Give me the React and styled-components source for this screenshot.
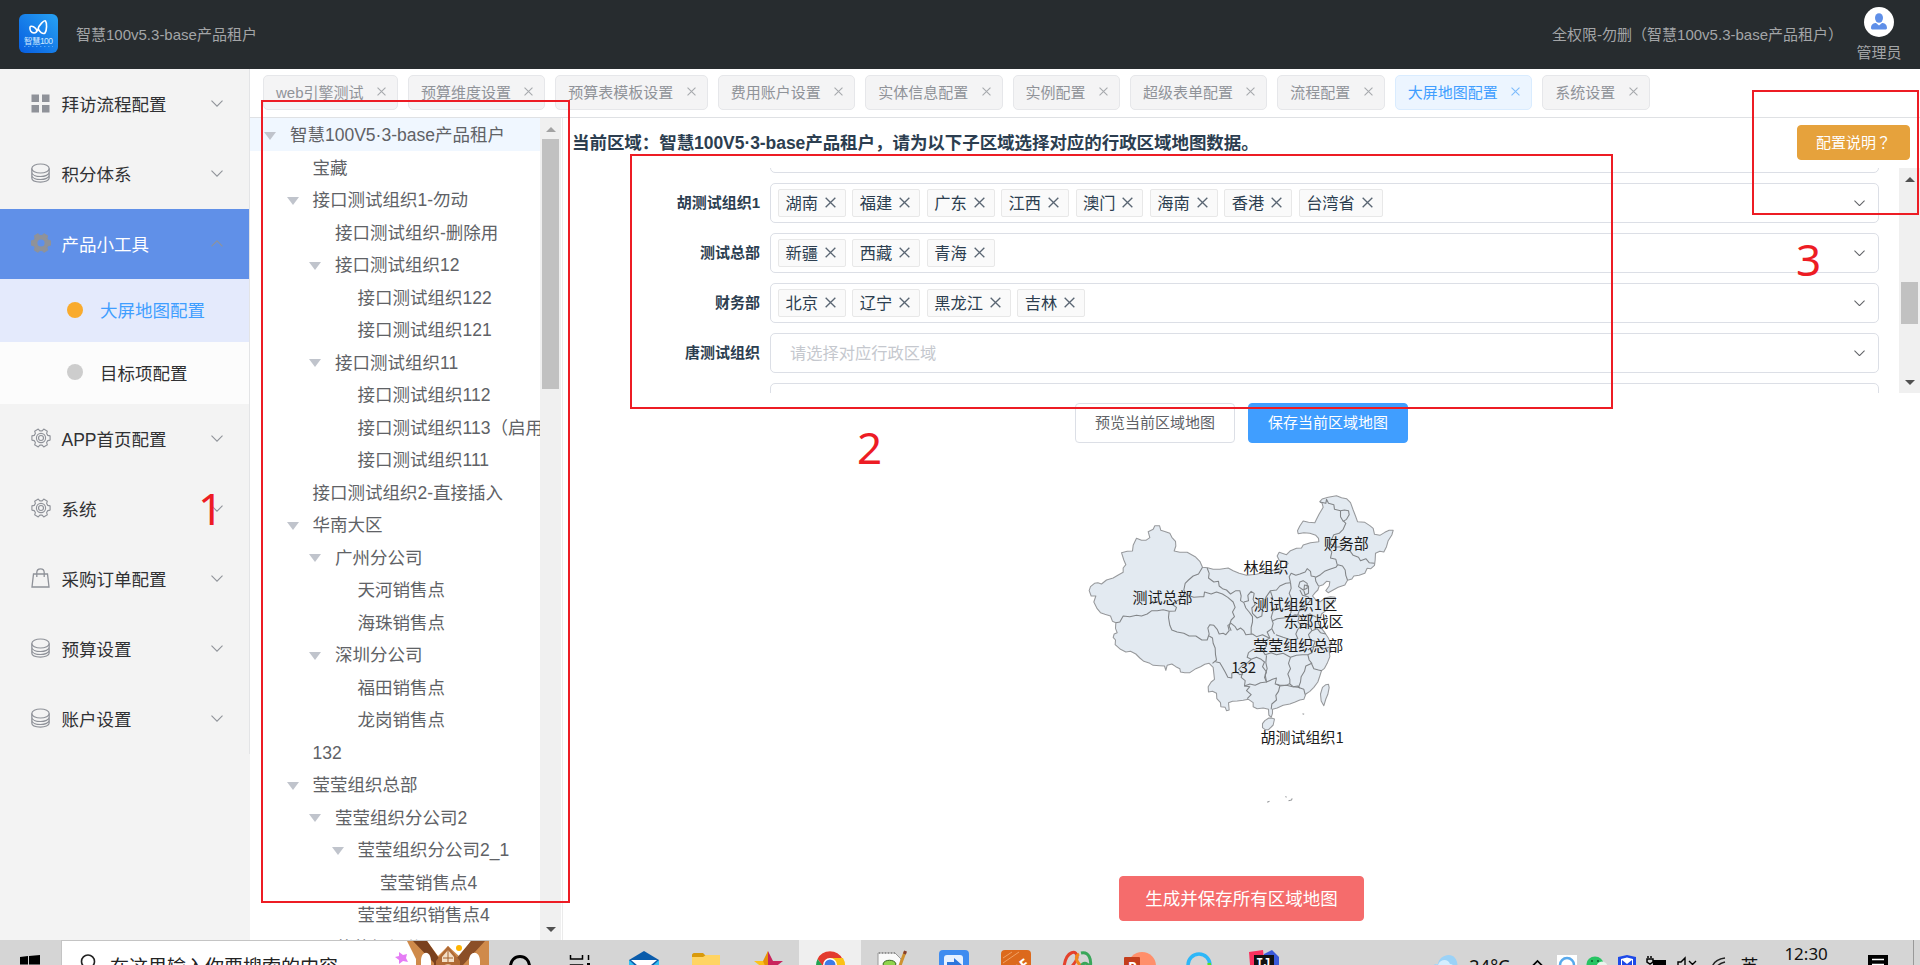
import React from "react";
import styled, { createGlobalStyle } from "styled-components";

const Global = createGlobalStyle`
  * { box-sizing: border-box; }
  html, body { margin: 0; padding: 0; }
  body {
    width: 1920px; height: 965px; overflow: hidden; background: #fff;
    font-family: "Liberation Sans", "Noto Sans CJK SC", sans-serif;
    color: #2c3e50;
  }
`;

const Page = styled.div`
  position: relative; display: flex; flex-direction: column;
  width: 1920px; height: 965px; overflow: hidden;
`;

/* ---------- top bar ---------- */
const Header = styled.header`
  display: flex; align-items: center; height: 69px; flex: none;
  background: #272c2f; color: #a3a5a7; font-size: 15px; padding: 0 18px 0 19px;
`;
const Tenant = styled.span`margin: 0 auto 3px 18px; white-space: nowrap;`;
const Logo = styled.svg`width: 39px; height: 39px; display: block; margin-bottom: 2px;`;
const Role = styled.span`white-space: nowrap; margin: 0 13px 3px 0;`;
const User = styled.div`
  display: flex; flex-direction: column; align-items: center; width: 46px;
  height: 69px; padding-top: 7px; line-height: 20px; gap: 6px;
`;

/* ---------- body ---------- */
const Body = styled.div`display: flex; flex: none; height: 871px;`;

const Sidebar = styled.nav`
  width: 250px; flex: none; background: #f3f3f3; font-size: 17.5px; color: #303133;
`;
const MenuList = styled.div`border-right: 1px solid #e3e4e6;`;
const MenuItem = styled.div`
  display: flex; align-items: center; height: 70px; padding: 0 26px 2px 31px;
  background: ${(p) => (p.$open ? "#6090e8" : "transparent")};
  color: ${(p) => (p.$open ? "#fff" : "#303133")};
`;
const MenuIcon = styled.span`
  display: flex; align-items: center; justify-content: center; width: 19px; height: 20px;
  svg { display: block; flex: none; }
`;
const MenuLabel = styled.span`flex: 1; margin-left: 11.5px; white-space: nowrap;`;
const SubItem = styled.div`
  display: flex; align-items: center; height: 62.5px; padding: 0 0 1px 67px; gap: 17px;
  background: ${(p) => (p.$active ? "#e4eafc" : "#fcfcfc")};
  color: ${(p) => (p.$active ? "#409eff" : "#303133")};
`;
const Dot = styled.i`
  width: 16px; height: 16px; border-radius: 50%; 
  background: ${(p) => (p.$active ? "#f9ab2d" : "#cdcdcd")};
`;

const Content = styled.div`display: flex; flex-direction: column; width: 1670px;`;
const Tabs = styled.div`
  display: flex; gap: 10px; height: 49px; flex: none; padding: 6px 0 0 13px;
  border-bottom: 1px solid #dfe1e4; 
`;
const Tab = styled.div`
  display: flex; align-items: center; height: 35px; flex: none; gap: 13.4px;
  padding: 0 11px 2px 12px; border-radius: 5px; font-size: 15px; white-space: nowrap;
  border: 1px solid ${(p) => (p.$active ? "#d9ecff" : "#e6e7ea")};
  background: ${(p) => (p.$active ? "#ecf5ff" : "#f4f4f5")};
  color: ${(p) => (p.$active ? "#409eff" : "#909399")};
`;
const Columns = styled.div`display: flex; height: 822px;`;

/* ---------- tree ---------- */
const TreePane = styled.div`
  display: flex; width: 313px; flex: none; height: 822px; overflow: hidden;
  border-right: 1px solid #ebebeb;
`;
const TreeRows = styled.div`width: 290px; flex: none; height: 822px; overflow: hidden;`;
const TreeRow = styled.div`
  display: flex; align-items: center; height: 32.5px; font-size: 17.5px; color: #606266;
  white-space: nowrap; overflow: hidden; line-height: 30px;
  padding: 2px 0 0 ${(p) => 14 + p.$level * 22.5}px;
  background: ${(p) => (p.$active ? "#f0f7ff" : "#fff")};
`;
const Caret = styled.span`
  width: 26px; flex: none; height: 8px; margin-top: 1px;
  &::before {
    content: ""; display: ${(p) => (p.$show ? "block" : "none")}; width: 0; height: 0;
    border: 6.5px solid transparent; border-top: 8px solid #c0c4cc; border-bottom: 0;
  }
`;
const Track = styled.div`
  display: flex; flex-direction: column; align-items: center; justify-content: space-between;
  width: 21px; height: ${(p) => p.$h}px; flex: none; background: #f0f0f0; padding: 9px 0 8px;
`;
const Arrow = styled.i`
  width: 0; height: 0; border: 5px solid transparent;
  ${(p) => (p.$up ? "border-top: 0; border-bottom" : "border-bottom: 0; border-top")}: 5px solid ${(p) => p.$c || "#505050"};
`;
const Thumb = styled.i`
  width: 17px; height: ${(p) => p.$h}px; margin: ${(p) => p.$top}px 0 auto; background: #c1c1c1;
`;

/* ---------- region form ---------- */
const Panel = styled.main`display: flex; flex-direction: column; align-items: center; width: 1357px;`;
const PanelHead = styled.div`
  display: flex; align-items: center; justify-content: space-between; align-self: stretch;
  height: 50px; flex: none; padding: 0 10px 1px 9px;
`;
const Title = styled.h1`
  margin: 0 0 2px; font-size: 17.5px; font-weight: 700; white-space: nowrap; letter-spacing: -.06px;
`;
const Button = styled.button`
  height: ${(p) => p.$h || 40}px; padding: 0 ${(p) => p.$px || 19}px 3px; border-radius: 4px;
  border: 1px solid ${(p) => p.$bd || p.$bg}; background: ${(p) => p.$bg}; color: ${(p) => p.$fg || "#fff"};
  font: ${(p) => p.$size || 15}px "Liberation Sans", "Noto Sans CJK SC", sans-serif; white-space: nowrap;
`;
const CenteredMark = styled.span`font-family: "Noto Sans CJK TC", sans-serif; line-height: 1;`;
const FormScroll = styled.div`display: flex; align-self: stretch; height: 225px; flex: none; overflow: hidden;`;
const Rows = styled.div`
  display: flex; flex-direction: column; gap: 10px; width: 1336px; margin-top: -35px; flex: none;
`;
const FormRow = styled.div`display: flex; align-items: center; gap: 10px; height: 40px; flex: none;`;
const Label = styled.label`width: 197px; text-align: right; font-size: 15px; font-weight: 700; padding-bottom: 3px;`;
const Select = styled.div`
  display: flex; align-items: center; gap: 6.5px; width: 1109px; height: 40px;
  border: 1px solid #dcdfe6; border-radius: 5px; padding: 0 13px 0 7px; font-size: 16.25px;
  > svg { margin-left: auto; }
`;
const Placeholder = styled.span`color: #c5c8ce; padding: 0 0 3px 12px;`;
const Tag = styled.span`
  display: flex; align-items: center; gap: 7px; height: 28px; padding: 0 9px 2px 6.4px;
  border: 1px solid #e8e8e8; border-radius: 2px; background: #fafafa; white-space: nowrap;
`;
const Actions = styled.div`display: flex; gap: 13px; margin-top: 10px;`;
const MapBox = styled.svg`width: 340px; height: 340px; margin: 37px 0 56px; flex: none; display: block;`;

/* ---------- taskbar ---------- */
const Taskbar = styled.footer`
  display: flex; align-items: center; height: 50px; flex: none; background: #d5d5d5; color: #111;
  font-family: "Noto Sans", "Noto Sans CJK SC", sans-serif;
  svg { display: block; flex: none; }
`;
const Start = styled.div`display: flex; width: 61px; height: 50px; justify-content: center; flex: none;`;
const Search = styled.div`
  display: flex; align-items: center; width: 428px; height: 50px; background: #fff; flex: none;
  border: 1px solid #c4c4c4; border-bottom: 0; border-right: 0; font-size: 19px; color: #222;
`;
const SearchText = styled.span`width: 285px; white-space: nowrap; margin-left: 10px;`;
const AppSlot = styled.div`
  width: 62px; height: 50px; flex: none; background: ${(p) => (p.$active ? "#efefef" : "transparent")};
`;
const Weather = styled.div`display: flex; align-items: center; gap: 10px; margin-left: 134px; width: 94px; font-size: 18.5px; white-space: nowrap;`;
const Tray = styled.div`display: flex; align-items: center;`;
const Ime = styled.span`width: 34px; text-align: center; font-size: 18px;`;
const Clock = styled.span`width: 78px; padding-left: 18px; height: 46px; font-size: 17px; line-height: 23px;`;

/* ---------- red marks over the page ---------- */
const MarkFrame = styled.div`
  position: absolute; left: ${(p) => p.$x}px; top: ${(p) => p.$y}px;
  width: ${(p) => p.$w}px; height: ${(p) => p.$h}px; border: 2px solid #ed1c24; pointer-events: none;
`;
const MarkNumber = styled.span`
  position: absolute; left: ${(p) => p.$x}px; top: ${(p) => p.$y}px; color: #ed1c24;
  font: 44px/44px "Noto Sans", sans-serif; pointer-events: none;
`;

const Chevron = ({ up, color = "#8f9399", w = 12 }) => (
  <svg width={w} height={w / 2 + 1} viewBox="0 0 12 7" fill="none" stroke={color} strokeWidth="1.1">
    <path d={up ? "M.5 6.3 6 .8l5.500 5.500" : "M.5.7 6 6.200 11.500.7"} />
  </svg>
);
const Cross = ({ size = 9, color = "#a6a9ad" }) => (
  <svg width={size} height={size} viewBox="0 0 10 10" stroke={color} strokeWidth="1.2">
    <path d="M.6.6l8.800 8.800M9.400.6.6 9.400" />
  </svg>
);

const polar = (r, deg) => {
  const a = (deg * Math.PI) / 180;
  return `${(10 + r * Math.cos(a)).toFixed(2)} ${(10 + r * Math.sin(a)).toFixed(2)}`;
};
const gearPath =
  "M" +
  [0, 60, 120, 180, 240, 300]
    .flatMap((a) => [polar(9.8, a - 13), polar(9.8, a + 13), polar(7.6, a + 21), polar(7.6, a + 39)])
    .join("L") +
  "Z";
const icons = {
  grid: (
    <svg width="19" height="19" viewBox="0 0 19 19" fill="#8f9299">
      <path d="M.5.5h7.500v7.500H.5zM11 .5h7.500v7.500H11zM.5 11h7.500v7.500H.5zM11 11h7.500v7.500H11z" />
    </svg>
  ),
  coin: (
    <svg width="19" height="20" viewBox="0 0 19 20" fill="none" stroke="#8f9299" strokeWidth="1.200">
      <ellipse cx="9.500" cy="5.500" rx="8.700" ry="4.500" />
      <path d="M.8 5.500v3.500c0 6 17.400 6 17.400 0V5.500M.8 9v3c0 6 17.400 6 17.400 0V9M.8 12v3c0 5.400 17.400 5.400 17.400 0v-3" />
    </svg>
  ),
  tools: (
    <svg width="20" height="20" viewBox="0 0 20 20" fill="none">
      <path d={gearPath} fill="#8f9299" stroke="#8f9299" strokeLinejoin="round" /><circle cx="10" cy="10" r="3.600" fill="#6090e8" />
    </svg>
  ),
  gear: (
    <svg width="20" height="20" viewBox="-.5 -.5 21 21" fill="none" stroke="#8f9299" strokeWidth="1.200" strokeLinejoin="round">
      <path d={gearPath} /><circle cx="10" cy="10" r="4.800" /><circle cx="10" cy="10" r="2.600" />
    </svg>
  ),
  bag: (
    <svg width="19" height="20" viewBox="0 0 19 20" fill="none" stroke="#8f9299" strokeWidth="1.300">
      <path d="M2.500 6h14l1.500 13H1zM5.800 9V4.500c0-4.800 7.400-4.800 7.400 0V9" />
    </svg>
  ),
};

const menuBefore = [["grid", "拜访流程配置"], ["coin", "积分体系"]];
const menuAfter = [["gear", "APP首页配置"], ["gear", "系统"], ["bag", "采购订单配置"], ["coin", "预算设置"], ["coin", "账户设置"]];

const MenuEntry = ({ icon, label, open }) => (
  <MenuItem $open={open}>
    <MenuIcon>{icons[icon]}</MenuIcon>
    <MenuLabel>{label}</MenuLabel>
    <Chevron up={open} />
  </MenuItem>
);

const tabs = ["web引擎测试", "预算维度设置", "预算表模板设置", "费用账户设置", "实体信息配置", "实例配置", "超级表单配置", "流程配置", "大屏地图配置", "系统设置"];

const tree = [
  [0, "智慧100V5·3-base产品租户", 1], [1, "宝藏"], [1, "接口测试组织1-勿动", 1], [2, "接口测试组织-删除用"],
  [2, "接口测试组织12", 1], [3, "接口测试组织122"], [3, "接口测试组织121"], [2, "接口测试组织11", 1],
  [3, "接口测试组织112"], [3, "接口测试组织113（启用）"], [3, "接口测试组织111"], [1, "接口测试组织2-直接插入"],
  [1, "华南大区", 1], [2, "广州分公司", 1], [3, "天河销售点"], [3, "海珠销售点"], [2, "深圳分公司", 1],
  [3, "福田销售点"], [3, "龙岗销售点"], [1, "132"], [1, "莹莹组织总部", 1], [2, "莹莹组织分公司2", 1],
  [3, "莹莹组织分公司2_1", 1], [4, "莹莹销售点4"], [3, "莹莹组织销售点4"], [2, "莹莹组织分公司"],
];

const regions = [
  ["", []],
  ["胡测试组织1", ["湖南", "福建", "广东", "江西", "澳门", "海南", "香港", "台湾省"]],
  ["测试总部", ["新疆", "西藏", "青海"]],
  ["财务部", ["北京", "辽宁", "黑龙江", "吉林"]],
  ["唐测试组织", null],
  ["", []],
];

const mainland =
  "M255 137L269 137L273 151L287 155L300 160L306 172L317 184L318 198L313 213L330 217L352 217L376 230L390 244L398 262L413 263L430 268L450 268L475 264L490 272L508 280L530 286L560 283L600 272L640 266L655 250L645 242L628 241L622 228L628 217L650 224L662 212L680 205L695 204L700 195L722 188L747 185L746 175L738 166L720 160L702 158L685 161L683 152L690 138L700 123L716 127L735 128L740 118L748 102L760 82L757 70L750 65L757 57L775 52L800 47L815 53L830 56L842 68L850 90L857 108L863 125L885 127L900 137L910 145L914 163L930 166L945 157L958 151L970 151L966 165L955 182L950 200L942 216L930 214L917 220L916 240L914 256L903 266L892 265L885 280L868 286L852 288L846 297L833 301L825 315L805 322L790 330L775 338L768 332L778 318L780 305L770 304L760 314L748 318L744 330L736 338L728 348L740 362L752 365L765 354L782 350L796 352L797 362L782 375L768 392L755 402L750 418L745 430L755 445L765 458L776 475L782 490L778 510L780 530L772 550L764 565L755 572L750 588L744 606L732 622L720 634L708 642L702 658L690 660L676 666L660 672L640 676L622 684L608 688L608 700L604 712L597 705L596 688L580 684L562 686L550 680L550 668L536 658L520 661L502 663L488 664L476 668L478 690L470 692L466 682L453 680L452 668L441 656L440 640L428 634L416 636L415 620L424 606L434 598L432 580L430 562L418 550L405 553L392 560L378 566L360 578L345 578L332 576L330 566L318 560L306 552L292 556L288 571L284 558L270 557L250 556L240 550L222 544L210 534L198 522L182 514L168 516L152 508L136 494L137 480L130 472L133 462L142 458L137 445L138 428L128 424L122 408L105 403L92 398L82 386L72 366L78 348L64 348L58 332L62 320L74 310L84 308L95 312L110 300L130 294L144 286L160 277L160 264L168 254L162 240L155 218L172 214L188 213L190 196L200 175L215 181L228 181L240 173L235 155L250 148Z";

const provinces = [
  "M138 428L150 426L160 408L180 410L200 406L215 408L232 402L246 392L262 392L280 389L298 394L316 393L320 382L306 372L330 358L340 346",
  "M398 262L386 282L370 288L356 300L346 310L342 330L350 344L372 352L392 350L402 350L404 336L424 342L440 336L458 342L474 352L490 366L496 382L488 396L494 410L484 420L478 438L484 452",
  "M298 394L296 412L300 436L306 450L322 456L342 460L358 468L378 468L396 480L412 480L418 462L414 444L420 434L432 436L442 448L448 462L460 460L468 464L478 452L474 436L484 430L496 440L502 450L512 444L522 452L528 464L548 462L560 470L578 464L598 474",
  "M412 264L418 280L416 294L432 306L446 304L448 318L458 326L470 330L482 342L498 332L510 332L514 348L512 362L522 368L528 384L538 396L548 410L548 426L544 442L544 462",
  "M522 366L536 362L534 346L544 334L553 340L550 358L556 374L546 384L548 400L562 414L576 408L578 388L586 372L588 352L602 332L620 330L630 318L648 310L662 308",
  "M602 334L608 352L604 372L610 392L604 412L610 430L606 446L614 462",
  "M418 468L428 474L430 490L436 504L437 524L440 540L428 550M437 545L450 548L458 562L466 576L474 592L486 594L486 580L500 576L510 584L520 582",
  "M662 308L658 290L664 280L678 286L690 282L706 276L712 266L722 274L724 288L736 290L738 304L746 318",
  "M738 292L752 284L764 274L780 268L798 262L804 254L818 258L826 270L828 286L833 300",
  "M781 188L778 205L786 216L782 234L798 238L802 254M781 190L796 202L810 200L824 210L840 212L850 226L866 232L872 242L888 236L898 248L914 250",
  "M750 66L768 70L770 58L776 70L792 74L794 88L812 92L824 90L836 92L838 104L830 118L820 124L812 110L812 94M822 124L828 130L820 148L808 160L792 164L786 176L781 190",
  "M690 306L700 302L712 310L712 325L700 330L686 320ZM704 315L716 318L716 340L706 345L702 332Z",
  "M662 308L664 325L658 340L666 358L660 380L664 396L656 412M690 330L698 346L714 350L722 360L710 376L690 388L684 404L664 410",
  "M606 424L622 416L640 414L656 412L676 404L688 410L684 424L694 438L684 448L678 462L684 476L664 480L640 472L618 464",
  "M684 404L700 410L720 402L740 412M694 438L704 430L720 436L726 452L716 464L722 480L736 484L730 500L714 510M726 452L742 446L752 458L768 462",
  "M606 446L592 456L600 474L586 482L590 498L578 512L586 524L604 518L620 524L640 520L662 532L680 526L698 524L714 524L726 518L732 500L748 498L762 506L778 502",
  "M536 518L550 508L566 514L580 512M536 518L532 532L544 538L560 532L574 538L584 546L578 560L590 576L584 592L590 606L572 608L556 616L540 612L524 618L526 602L514 592L518 578L506 568L518 556L534 548L544 538",
  "M590 526L588 548L592 566L586 584L590 606L608 598L620 594L616 612L630 616L650 616L660 610M662 532L656 550L662 566L654 582L660 598L660 612L670 620L684 618L690 624",
  "M714 524L718 540L726 550L708 558L704 574L694 590L692 606L686 622M724 548L732 566L746 570L756 572",
  "M524 618L540 620L530 632L544 644L532 656M620 612L630 618L626 634L618 646L620 660L606 672L604 688M630 618L650 616L668 620L684 622L702 628L706 644",
];

const mapLabels = [
  [762, 207, "财务部"], [521, 280, "林组织"], [188, 370, "测试总部"], [552, 391, "测试组织1区"],
  [641, 440, "东部战区"], [550, 512, "莹莹组织总部"], [484, 578, "132"], [572, 789, "胡测试组织1"],
];

const RegionMap = () => (
  <MapBox viewBox="6.500 0 1020 1020">
    <g fill="#e3eaf1" stroke="#97999c" strokeWidth="3.200" strokeLinejoin="round">
      <path d={mainland} />
      <path d="M752 642l6-20 10-8 8-1 2 10-4 20-6 14-6 20-8-14z" />
      <path d="M585 722l12-8 10 1 7 2-4 18-14 14-10 0-8-6 0-12z" />
      <path d="M698 701l5 2M592 967l7-3M647 949l3 3M656 962l9-2 2-5" fill="none" />
    </g>
    <g fill="none" stroke="#828588" strokeWidth="3.200" strokeLinejoin="round">
      {provinces.map((d, i) => <path key={i} d={d} />)}
    </g>
    <g fill="#1b1b1b" fontSize="45" fontFamily='"Noto Sans CJK SC", sans-serif'>
      {mapLabels.map(([x, y, t]) => <text key={t} x={x} y={y}>{t}</text>)}
    </g>
  </MapBox>
);

const apps = [
  <circle cx="31" cy="26" r="9.500" fill="none" stroke="#000" strokeWidth="3" />,
  <g fill="none" stroke="#000" strokeWidth="1.500"><path d="M19.500 15v4h12v-4M19.500 35V25h12v10M37.500 15v5" /><path d="M36 23h3v3h-3z" fill="#000" stroke="none" /></g>,
  <g><path d="M16 20l15-9 15 9v18H16z" fill="#0b5cab" /><path d="M16 20l15 14 15-14v20H16z" fill="#35c0f2" /><path d="M18 20h26L31 31z" fill="#fff" /></g>,
  <g><path d="M17 15c0-1 1-2 2-2h9l3 3v8H17z" fill="#d99a0b" /><path d="M17 17h11l3-2h14v25H17z" fill="#ffd463" /></g>,
  <g><path d="M31 11l-4 10H17l9 7-3 12 8-7z" fill="#fbc21b" /><path d="M31 11l5 10h10l-9 7 4 12-10-7z" fill="#c9245c" /><path d="M31 11v22l-5-12z" fill="#e89208" /></g>,
  <g><circle cx="31" cy="25" r="14" fill="#fff" /><path d="M18.500 19a14 14 0 0 1 25 0H31a7 7 0 0 0-6 9z" fill="#e33b2e" /><path d="M18.500 19a14 14 0 0 0 10 20l5-8-8-3z" fill="#21a350" /><path d="M31 18h13a14 14 0 0 1-13 21l6-10z" fill="#fbc116" /><circle cx="31" cy="25" r="7" fill="#fff" /><circle cx="31" cy="25" r="5.500" fill="#3c7be8" /></g>,
  <g><path d="M17 13h17l6 6v20H17z" fill="#fafafa" stroke="#999" /><path d="M18 13h17" stroke="#666" strokeDasharray="1 2" /><path d="M22 24c1-5 12-5 13 0l-3 5h-8z" fill="#8fd44c" stroke="#3a6622" /><path d="M44 12l-7 19" stroke="#cf9130" strokeWidth="3" /><path d="M44.500 11l-1 3" stroke="#863f2c" strokeWidth="3" /></g>,
  <g><rect x="16" y="10" width="30" height="30" rx="4" fill="#3f8cf0" /><rect x="21" y="15" width="19" height="20" rx="3" fill="#e7f1ff" /><path d="M24 22h7v-4l8 7-8 7v-4h-7z" fill="#2d76dc" /></g>,
  <g><rect x="16" y="10" width="30" height="30" rx="4" fill="#dc691c" /><path d="M18 23l16-11M18 18l9-6" stroke="#f0a165" /><text x="17" y="35" transform="rotate(-38 31 28)" fontSize="14" fontWeight="700" fill="#fff">PDF</text></g>,
  <g fill="none" strokeWidth="3"><path d="M17 27c2-17 14-18 13-9-1 5-5 7-10 15" stroke="#e4422c" /><path d="M32 14c-6 3-1 12 8 15" stroke="#f08a1e" /><path d="M34 13c8-2 11 7 9 15-3-8-11-5-8 3" stroke="#3aa65a" /></g>,
  <g><circle cx="33" cy="26" r="14" fill="#ff8f6b" /><rect x="15" y="17" width="16" height="18" rx="1" fill="#c43e1c" /><text x="19" y="32" fontSize="14" fontWeight="700" fill="#fff">P</text></g>,
  <g fill="none" strokeWidth="3.500"><circle cx="28" cy="25" r="11" stroke="#2db7f8" /><path d="M38 23l1 6" stroke="#57e31e" /></g>,
  <g><path d="M16 12l14-2 3 26-15 2z" fill="#fb315f" /><path d="M31 14l8-4 7 7v20H31z" fill="#3b5bdb" /><rect x="21" y="15" width="20" height="21" fill="#121212" /><text x="23" y="27" fontSize="12" fontWeight="700" fill="#fff" fontFamily="Liberation Mono">IJ</text></g>,
];

const trayIcons = [
  <path d="M9.500 27l6-6 6 6" fill="none" stroke="#000" strokeWidth="1.700" />,
  <g><rect x="5" y="15" width="20" height="20" fill="#fff" /><circle cx="15" cy="25" r="7" fill="none" stroke="#58a9ec" strokeWidth="2.500" /></g>,
  <g><ellipse cx="13" cy="24" rx="8.500" ry="7.500" fill="#28c463" /><circle cx="10" cy="21" r="1" fill="#0a5f2b" /><circle cx="16" cy="21" r="1" fill="#0a5f2b" /><circle cx="20" cy="27" r="5.500" fill="#e9f5ec" /></g>,
  <g><path d="M6 17l9-2 9 2v9c0 5-4 8-9 10-5-2-9-5-9-10z" fill="#1e4ae8" /><path d="M9 19l6-1.500 6 1.500v7l-6 5-6-5z" fill="#fff" /><path d="M10 20l5 4 5-4v6h-10z" fill="#1e4ae8" /></g>,
  <g><path d="M6 18v-2M9 18v-2M5 19h6v3l-3 2-3-2zM8 24v6" fill="none" stroke="#000" strokeWidth="1.500" /><rect x="11" y="20" width="13" height="8" fill="#000" /></g>,
  <g fill="none" stroke="#000" strokeWidth="1.400"><path d="M6 22h3l4-4v16l-4-4H6zM17 21l7 7M24 21l-7 7" /></g>,
  <g fill="none" stroke="#222" strokeWidth="1.500"><path d="M10 28c1-6 6-9 13-10M14 29c1-4 5-6 9-7M18 30c1-2 3-3 5-4" /></g>,
];

export default function App() {
  return (
    <>
      <Global />
      <Page>
        <Header>
          <Logo viewBox="0 0 39 39">
            <defs>
              <linearGradient id="logo" x1="1" y1="0" x2="0" y2="1">
                <stop offset="0" stopColor="#27a2f3" /><stop offset="1" stopColor="#075de0" />
              </linearGradient>
            </defs>
            <rect width="39" height="39" rx="6" fill="url(#logo)" />
            <path d="M18 17c-1-4-6-6-7-4-.500 3 1 6 4 6 2 0 3-1 4-4 1-4 6-9 7.500-8 1.500 2 1.500 9-.500 12-2 1.500-6-1-7-5" fill="none" stroke="#fff" strokeWidth="1.600" />
            <text x="19.500" y="29.500" textAnchor="middle" fontSize="8.500" fill="#cfe9ff" textLength="29">智慧100</text>
            <path d="M5 32.500h29" stroke="#6cb2f5" strokeWidth=".8" strokeDasharray="1.500 2.500" />
          </Logo>
          <Tenant>智慧100v5.3-base产品租户</Tenant>
          <Role>全权限-勿删（智慧100v5.3-base产品租户）</Role>
          <User>
            <svg width="30" height="30" viewBox="0 0 30 30">
              <circle cx="15" cy="15" r="15" fill="#fff" />
              <ellipse cx="15" cy="11" rx="4" ry="4.800" fill="#5f8fe8" />
              <path d="M7 21c0-4 3-5 5-5l3 2.500 3-2.500c2 0 5 1 5 5 0 1-1 1.500-2 1.500H9c-1 0-2-.5-2-1.500z" fill="#5f8fe8" />
            </svg>
            <span>管理员</span>
          </User>
        </Header>

        <Body>
          <Sidebar>
            <MenuList>
              {menuBefore.map(([icon, label]) => <MenuEntry key={label} icon={icon} label={label} />)}
              <MenuEntry icon="tools" label="产品小工具" open />
              <SubItem $active><Dot $active />大屏地图配置</SubItem>
              <SubItem><Dot />目标项配置</SubItem>
              {menuAfter.map(([icon, label]) => <MenuEntry key={label} icon={icon} label={label} />)}
            </MenuList>
          </Sidebar>

          <Content>
            <Tabs>
              {tabs.map((t) => {
                const active = t === "大屏地图配置";
                return <Tab key={t} $active={active}>{t}<Cross color={active ? "#7dbcfc" : undefined} /></Tab>;
              })}
            </Tabs>
            <Columns>
              <TreePane>
                <TreeRows>
                  {tree.map(([level, name, parent], i) => (
                    <TreeRow key={i} $level={level} $active={i === 0}><Caret $show={parent} />{name}</TreeRow>
                  ))}
                </TreeRows>
                <Track $h={822}><Arrow $up $c="#a3a3a3" /><Thumb $h={250} $top={7} /><Arrow /></Track>
              </TreePane>

              <Panel>
                <PanelHead>
                  <Title>当前区域：智慧100V5·3-base产品租户，请为以下子区域选择对应的行政区域地图数据。</Title>
                  <Button $bg="#e6a23c" $h={35} $px={18}>配置说明<CenteredMark>？</CenteredMark></Button>
                </PanelHead>
                <FormScroll>
                  <Rows>
                    {regions.map(([name, tags], i) => (
                      <FormRow key={i}>
                        <Label>{name}</Label>
                        <Select>
                          {tags ? tags.map((t) => <Tag key={t}>{t}<Cross size={11} color="#5a6673" /></Tag>) : <Placeholder>请选择对应行政区域</Placeholder>}
                          <Chevron color="#606266" w={11} />
                        </Select>
                      </FormRow>
                    ))}
                  </Rows>
                  <Track $h={225}><Arrow $up /><Thumb $h={42} $top={100} /><Arrow /></Track>
                </FormScroll>
                <Actions>
                  <Button $bg="#fff" $bd="#dcdfe6" $fg="#606266">预览当前区域地图</Button>
                  <Button $bg="#409eff">保存当前区域地图</Button>
                </Actions>
                <RegionMap />
                <Button $bg="#f56c6c" $h={45} $px={25} $size={17.5}>生成并保存所有区域地图</Button>
              </Panel>
            </Columns>
          </Content>
        </Body>

        <Taskbar>
          <Start>
            <svg width="61" height="50" viewBox="0 0 61 50"><path d="M20 17l8-1v8.500h-8zM29 16l11-1v9.500H29zM20 26h8v8l-8-1zM29 26h11v9l-11-1z" fill="#000" /></svg>
          </Start>
          <Search>
            <svg width="38" height="50" viewBox="0 0 38 50" fill="none" stroke="#222" strokeWidth="1.600"><circle cx="26" cy="20.500" r="6.500" /><path d="M22 26l-5 8" /></svg>
            <SearchText>在这里输入你要搜索的内容</SearchText>
            <svg width="94" height="50" viewBox="-10 0 94 50">
              <path d="M-6 11l4 3 4-1-1 4 2 4-5-1-4 3 0-4-4-3 4-1z" fill="#e57cf5" />
              <path d="M2 0h82v50H11V18z" fill="#cf8a4a" />
              <path d="M22 0h44L55 16 43 5 33 15z" fill="#fff" />
              <path d="M8 0h14l14 20v30h-7V22z" fill="#7a411e" />
              <path d="M80 0H66L51 18v32h7V24z" fill="#8b4f27" />
              <path d="M16 50V20c0-11 10-11 10 0v30zM64 50V20c0-11 11-11 11 0v30z" fill="#fff" />
              <path d="M31 50V20L43 5l12 15v30z" fill="#b06a35" />
              <path d="M37 16l6-7 6 7v5H37z" fill="#f4dfc6" /><path d="M43 9v12M38 17h10" stroke="#a3602d" />
              <path d="M36 50V30c0-9 14-9 14 0v20z" fill="#efd6b8" />
              <circle cx="54" cy="7" r="3" fill="#ffb400" />
            </svg>
          </Search>
          {apps.map((a, i) => (
            <AppSlot key={i} $active={i === 5}><svg width="62" height="50" viewBox="0 0 62 50">{a}</svg></AppSlot>
          ))}
          <Weather>
            <svg width="30" height="50" viewBox="0 0 30 50"><path d="M4 34c-4-5 0-11 5-10 1-8 12-12 17-6 4 5 3 14-2 16z" fill="#9bd2f7" /><path d="M4 34c-4-5 0-10 5-9 2-6 10-7 12-1 6 0 6 10 0 10z" fill="#d4eefe" /></svg>
            24°C
          </Weather>
          <Tray>
            {trayIcons.map((t, i) => <svg key={i} width="30" height="50" viewBox="0 0 30 50">{t}</svg>)}
            <Ime>英</Ime>
          </Tray>
          <Clock>12:30</Clock>
          <svg width="76" height="50" viewBox="0 0 76 50"><path d="M24 15h20v18H32l-5 4v-4h-3z" fill="#000" /><path d="M28 19.500h12M28 24.500h12" stroke="#fff" strokeWidth="1.500" /><path d="M69.500 0v50" stroke="#999" /></svg>
        </Taskbar>

        <MarkFrame $x={261} $y={100} $w={309} $h={803} />
        <MarkFrame $x={630} $y={154} $w={983} $h={255} />
        <MarkFrame $x={1752} $y={90} $w={167} $h={125} />
        <MarkNumber $x={198} $y={486}>1</MarkNumber>
        <MarkNumber $x={857} $y={425}>2</MarkNumber>
        <MarkNumber $x={1796} $y={237}>3</MarkNumber>
      </Page>
    </>
  );
}
